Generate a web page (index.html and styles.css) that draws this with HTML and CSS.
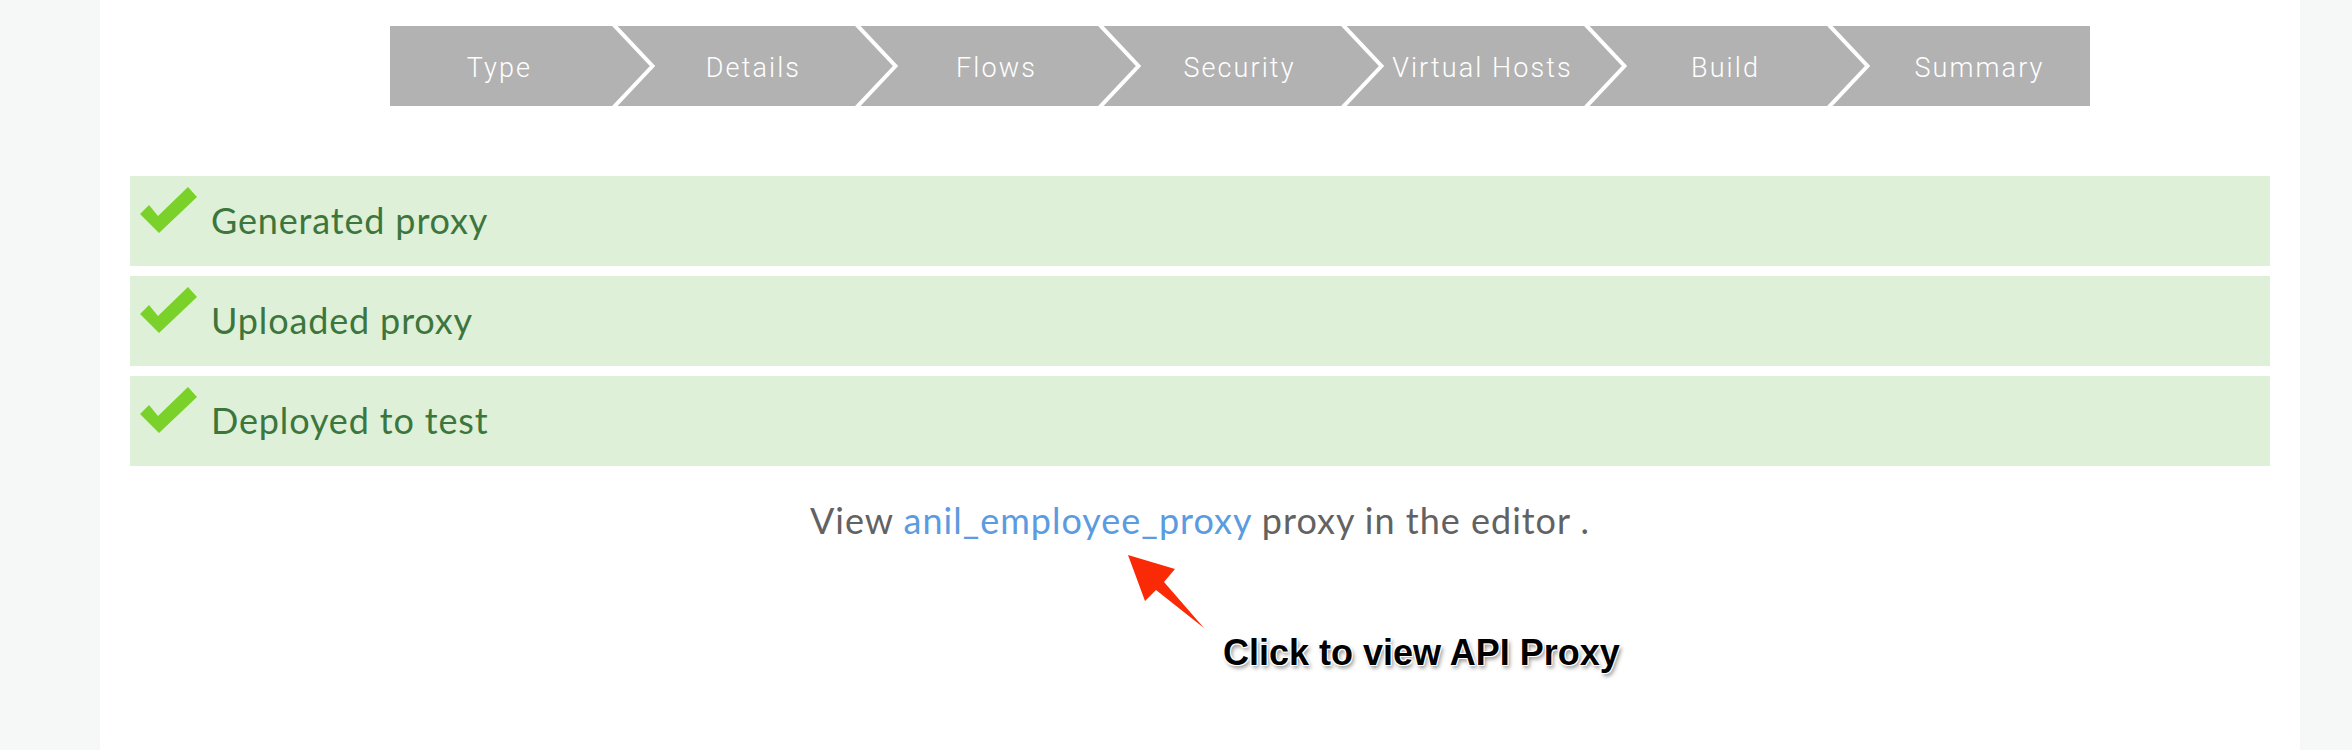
FILE: index.html
```html
<!DOCTYPE html>
<html lang="en">
<head>
<meta charset="utf-8">
<title>API Proxy Wizard - Summary</title>
<link rel="stylesheet" href="styles.css">
</head>
<body>
<div class="page">
  <aside class="rail rail-left"></aside>
  <main class="content">
    <nav class="stepper">
      <div class="step step-edge">Type</div>
      <svg class="sep" viewBox="0 0 46 80" width="46" height="80"><polyline points="3,-3 43.5,40 3,83" /></svg>
      <div class="step">Details</div>
      <svg class="sep" viewBox="0 0 46 80" width="46" height="80"><polyline points="3,-3 43.5,40 3,83" /></svg>
      <div class="step">Flows</div>
      <svg class="sep" viewBox="0 0 46 80" width="46" height="80"><polyline points="3,-3 43.5,40 3,83" /></svg>
      <div class="step">Security</div>
      <svg class="sep" viewBox="0 0 46 80" width="46" height="80"><polyline points="3,-3 43.5,40 3,83" /></svg>
      <div class="step">Virtual Hosts</div>
      <svg class="sep" viewBox="0 0 46 80" width="46" height="80"><polyline points="3,-3 43.5,40 3,83" /></svg>
      <div class="step">Build</div>
      <svg class="sep" viewBox="0 0 46 80" width="46" height="80"><polyline points="3,-3 43.5,40 3,83" /></svg>
      <div class="step step-edge">Summary</div>
    </nav>

    <div class="alerts">
      <div class="alert">
        <svg class="check" viewBox="0 0 57 46" width="57" height="46"><polygon points="0,27 9,18 18,29 48,0 57,10 19,46" /></svg>
        <span class="alert-text">Generated proxy</span>
      </div>
      <div class="alert">
        <svg class="check" viewBox="0 0 57 46" width="57" height="46"><polygon points="0,27 9,18 18,29 48,0 57,10 19,46" /></svg>
        <span class="alert-text">Uploaded proxy</span>
      </div>
      <div class="alert">
        <svg class="check" viewBox="0 0 57 46" width="57" height="46"><polygon points="0,27 9,18 18,29 48,0 57,10 19,46" /></svg>
        <span class="alert-text">Deployed to test</span>
      </div>
    </div>

    <p class="view-line">View <a class="proxy-link" href="#">anil_employee_proxy</a> proxy in the editor .</p>

    <svg class="annot-arrow" viewBox="0 0 90 85" width="90" height="85"><polygon points="8,5 55,19 44,32 84,78 36,40 25,51" /></svg>
    <div class="callout">Click to view API Proxy</div>
  </main>
  <aside class="rail rail-right"></aside>
</div>
</body>
</html>
```

FILE: styles.css
```css
html, body {
  margin: 0;
  padding: 0;
  background: #ffffff;
}

.page {
  display: flex;
  width: 2352px;
  height: 750px;
  overflow: hidden;
}

.rail {
  background: #f6f8f7;
  flex: none;
}

.rail-left {
  width: 100px;
}

.rail-right {
  width: 52px;
}

.content {
  position: relative;
  width: 2200px;
  flex: none;
  background: #ffffff;
}

/* Wizard stepper */
.stepper {
  display: flex;
  width: 1700px;
  height: 80px;
  margin: 26px 0 0 290px;
  background: #b2b2b2;
}

.step {
  width: 197px;
  flex: none;
  display: flex;
  align-items: center;
  justify-content: center;
  box-sizing: border-box;
  padding-top: 3px;
  color: #ffffff;
  font-family: Roboto, "Liberation Sans", sans-serif;
  font-weight: 300;
  font-size: 27px;
  letter-spacing: 2.1px;
  white-space: nowrap;
}

.step-edge {
  width: 219px;
}

.sep {
  flex: none;
  display: block;
  overflow: hidden;
}

.sep polyline {
  fill: none;
  stroke: #ffffff;
  stroke-width: 4;
  stroke-linejoin: miter;
}

/* Status rows */
.alerts {
  display: flex;
  flex-direction: column;
  gap: 10px;
  margin: 70px 30px 0 30px;
}

.alert {
  display: flex;
  align-items: flex-start;
  height: 90px;
  background: #dff0d8;
  box-sizing: border-box;
  padding: 11px 0 0 10px;
}

.check {
  flex: none;
  display: block;
}

.check polygon {
  fill: #7ad12a;
}

.alert-text {
  margin: 12px 0 0 14px;
  font-family: Lato, "Open Sans", sans-serif;
  font-size: 36px;
  line-height: 43px;
  letter-spacing: 0.85px;
  color: #3c763d;
}

/* Editor link line */
.view-line {
  margin: 33px 0 0 0;
  text-align: center;
  font-family: Lato, "Open Sans", sans-serif;
  font-size: 36px;
  line-height: 43px;
  letter-spacing: 1px;
  color: #626262;
}

.proxy-link {
  color: #5b9bdf;
  text-decoration: none;
}

/* Annotation overlay */
.annot-arrow {
  position: absolute;
  left: 1020px;
  top: 550px;
  display: block;
}

.annot-arrow polygon {
  fill: #fb2a06;
}

.callout {
  position: absolute;
  left: 1123px;
  top: 633px;
  font-family: "Liberation Sans", Arial, sans-serif;
  font-weight: 700;
  font-size: 36px;
  line-height: 40px;
  letter-spacing: 0;
  color: #000000;
  white-space: nowrap;
  text-shadow: -1px -1px 0 #fff, 1px -1px 0 #fff, -1px 1px 0 #fff, 1px 1px 0 #fff, 2px 3px 4px rgba(0, 0, 0, 0.45);
}
```
